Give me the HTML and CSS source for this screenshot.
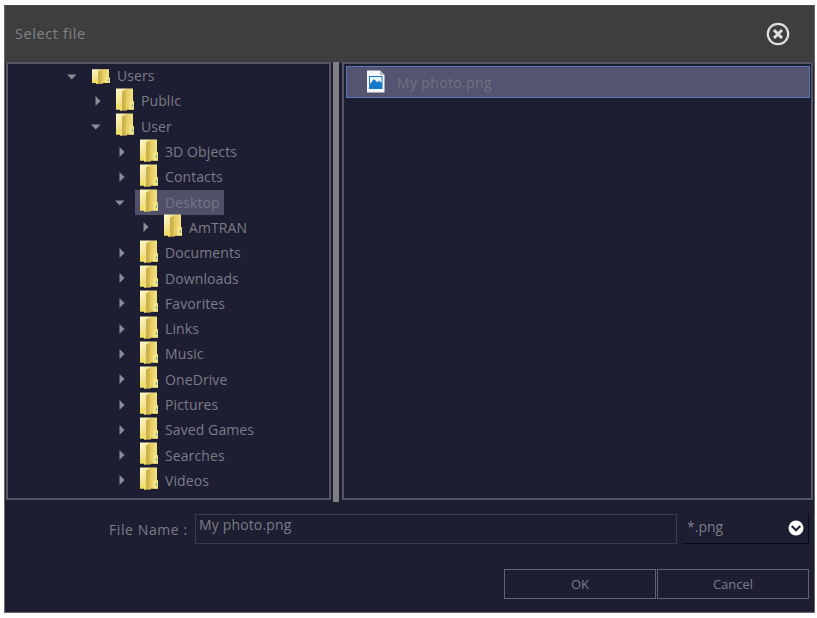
FILE: index.html
```
<!DOCTYPE html>
<html lang="en">
<head>
  <meta charset="UTF-8">
  <meta name="viewport" content="width=device-width, initial-scale=1">
  <title>Select file</title>
  <link rel="stylesheet" href="styles.css">
</head>
<body>
  <!-- Shared icons -->
  <svg class="sprite" width="0" height="0">
    <defs>
      <linearGradient id="back" x1="0" y1="0" x2="1" y2="1">
        <stop offset="0" stop-color="#fffbd0"/>
        <stop offset="0.5" stop-color="#f0dc80"/>
        <stop offset="1" stop-color="#d6b540"/>
      </linearGradient>
      <linearGradient id="flap" x1="0" y1="0" x2="1" y2="0">
        <stop offset="0" stop-color="#c4a640"/>
        <stop offset="0.35" stop-color="#e5cc61"/>
        <stop offset="1" stop-color="#f6e68c"/>
      </linearGradient>
    </defs>
    <symbol id="folder" viewBox="0 0 18 23" preserveAspectRatio="none">
      <path d="M0 0.5H17V13L18 14V21.500H11V22.500H4V21.500H0Z" fill="url(#back)"/>
      <path d="M7 3L11 1H17V13L18 14V21.500H11L7 22.500Z" fill="url(#flap)"/>
      <path d="M6 3L8 4V21L6 22Z" fill="#ccb14c"/>
      <path d="M0 16L6 18V22.500H4V21.500H0Z" fill="#eee06a"/>
      <path d="M13 14L16 12L18 14V21.500H13Z" fill="#f3e387"/>
      <path d="M15.500 18L17 15.500V19Z" fill="#68a9a0"/>
    </symbol>
    <symbol id="closed" viewBox="0 0 24 12"><path d="M4.500 1L9.500 6L4.500 11Z" fill="#8c8c98"/></symbol>
    <symbol id="open" viewBox="0 0 24 12"><path d="M0 4.500H9.500L4.800 9.500Z" fill="#8c8c98"/></symbol>
  </svg>

  <div class="dialog">
    <header class="titlebar">
      <h1>Select file</h1>
      <svg class="close" viewBox="0 0 24 24">
        <circle cx="12" cy="12" r="10.200"/>
        <path d="M8 8L16 16M16 8L8 16"/>
      </svg>
    </header>

    <main class="panes">
      <div class="pane folders">
        <ul class="tree">
          <li>
            <div class="row"><svg class="arrow"><use href="#open"/></svg><span class="item"><svg class="folder short"><use href="#folder"/></svg>Users</span></div>
            <ul>
              <li><div class="row"><svg class="arrow"><use href="#closed"/></svg><span class="item"><svg class="folder"><use href="#folder"/></svg>Public</span></div></li>
              <li>
                <div class="row"><svg class="arrow"><use href="#open"/></svg><span class="item"><svg class="folder"><use href="#folder"/></svg>User</span></div>
                <ul>
                  <li><div class="row"><svg class="arrow"><use href="#closed"/></svg><span class="item"><svg class="folder"><use href="#folder"/></svg>3D Objects</span></div></li>
                  <li><div class="row"><svg class="arrow"><use href="#closed"/></svg><span class="item"><svg class="folder"><use href="#folder"/></svg>Contacts</span></div></li>
                  <li>
                    <div class="row"><svg class="arrow"><use href="#open"/></svg><span class="item selected"><svg class="folder"><use href="#folder"/></svg>Desktop</span></div>
                    <ul>
                      <li><div class="row"><svg class="arrow"><use href="#closed"/></svg><span class="item"><svg class="folder"><use href="#folder"/></svg>AmTRAN</span></div></li>
                    </ul>
                  </li>
                  <li><div class="row"><svg class="arrow"><use href="#closed"/></svg><span class="item"><svg class="folder"><use href="#folder"/></svg>Documents</span></div></li>
                  <li><div class="row"><svg class="arrow"><use href="#closed"/></svg><span class="item"><svg class="folder"><use href="#folder"/></svg>Downloads</span></div></li>
                  <li><div class="row"><svg class="arrow"><use href="#closed"/></svg><span class="item"><svg class="folder"><use href="#folder"/></svg>Favorites</span></div></li>
                  <li><div class="row"><svg class="arrow"><use href="#closed"/></svg><span class="item"><svg class="folder"><use href="#folder"/></svg>Links</span></div></li>
                  <li><div class="row"><svg class="arrow"><use href="#closed"/></svg><span class="item"><svg class="folder"><use href="#folder"/></svg>Music</span></div></li>
                  <li><div class="row"><svg class="arrow"><use href="#closed"/></svg><span class="item"><svg class="folder"><use href="#folder"/></svg>OneDrive</span></div></li>
                  <li><div class="row"><svg class="arrow"><use href="#closed"/></svg><span class="item"><svg class="folder"><use href="#folder"/></svg>Pictures</span></div></li>
                  <li><div class="row"><svg class="arrow"><use href="#closed"/></svg><span class="item"><svg class="folder"><use href="#folder"/></svg>Saved Games</span></div></li>
                  <li><div class="row"><svg class="arrow"><use href="#closed"/></svg><span class="item"><svg class="folder"><use href="#folder"/></svg>Searches</span></div></li>
                  <li><div class="row"><svg class="arrow"><use href="#closed"/></svg><span class="item"><svg class="folder"><use href="#folder"/></svg>Videos</span></div></li>
                </ul>
              </li>
            </ul>
          </li>
        </ul>
      </div>
      <div class="splitter"></div>
      <div class="pane files">
        <div class="file">
          <svg class="picture" viewBox="0 0 18 23">
            <path d="M0 0.500H13L17.500 5V22.500H0Z" fill="#f4f6fa"/>
            <path d="M13 0.500V5H17.500Z" fill="#b9bcc8"/>
            <path d="M2 6H15.500V19H2Z" fill="#1878c8"/>
            <path d="M3 7H14.500V13L12 10.500L10.500 12.500L7 9L3 14Z" fill="#e9f3fb"/>
          </svg>
          <span>My photo.png</span>
        </div>
      </div>
    </main>

    <div class="name-row">
      <label for="name">File Name :</label>
      <input id="name" class="name" type="text" value="My photo.png">
      <div class="filter">
        <span>*.png</span>
        <svg class="chevron" viewBox="0 0 16 16">
          <circle cx="8" cy="8" r="7.500" fill="#fff"/>
          <path d="M3.700 6L8 10.300L12.300 6" fill="none" stroke="#1d1e31" stroke-width="2"/>
        </svg>
      </div>
    </div>

    <footer class="buttons">
      <button>OK</button>
      <button>Cancel</button>
    </footer>
  </div>
</body>
</html>
```
FILE: styles.css
```
* {
  box-sizing: border-box;
}
body {
  margin: 0;
  padding: 5px 2px 0 4px;
  background: #fff;
  font-family: "Open Sans", "Noto Sans", sans-serif;
  font-size: 14px;
  color: #7c7c87;
  overflow: hidden;
}
svg {
  flex: none;
}
.sprite {
  position: absolute;
}
.dialog {
  width: 811px;
  height: 608px;
  background: #1d1e31;
  border: 1px solid #6b6870;
  border-top-color: #494949;
}

/* Title bar */
.titlebar {
  height: 56px;
  padding: 0 24px 0 10px;
  display: flex;
  align-items: center;
  justify-content: space-between;
  background: #3e3e3e;
}
h1 {
  margin: -2px 0 0;
  font-size: 14.5px;
  font-weight: 400;
  letter-spacing: 0.6px;
  color: #83838a;
}
.close {
  width: 24px;
  height: 24px;
  fill: none;
  stroke: #dedede;
  stroke-width: 2.2;
}
.close path {
  stroke-width: 3;
}

/* Panes */
.panes {
  height: 441px;
  display: flex;
  background: linear-gradient(#3e3e3e 1px, transparent 1px);
  padding: 0 1px;
}
.pane {
  height: 438px;
  border: 2px solid #565665;
}
.folders {
  width: 325px;
  padding: 0 0 0 59px;
}
.splitter {
  width: 6px;
  height: 440px;
  margin: 0 3px 0 2px;
  background: #7e7e83;
}
.files {
  flex: 1;
  padding: 2px 1px 0 2px;
}

/* Folder tree */
ul {
  margin: 0;
  padding: 0 0 0 24px;
  list-style: none;
}
.tree {
  margin-top: -1px;
  padding: 0;
}
.row {
  height: 25.3px;
  display: flex;
  align-items: center;
  white-space: nowrap;
}
.arrow {
  width: 24px;
  height: 12px;
  margin-right: -4px;
}
.item {
  height: 25px;
  padding: 0 4px 0 5px;
  display: flex;
  align-items: center;
  letter-spacing: 0.1px;
}
.folder {
  width: 18px;
  height: 23px;
  margin: -3px 7px 0 0;
}
.folder.short {
  height: 15px;
  margin-top: 1px;
}
.selected {
  background: #50506b;
  color: #747484;
}

/* File list */
.file {
  height: 32px;
  padding-left: 20px;
  display: flex;
  align-items: center;
  background: #545470;
  border: 1px solid #5277b2;
  color: #71717f;
  letter-spacing: 0.35px;
}
.picture {
  width: 18px;
  height: 23px;
  margin: -2px 12px 0 0;
}

/* File name and filter */
.name-row {
  height: 30px;
  margin-top: 11px;
  padding: 0 5px 0 104px;
  display: flex;
  align-items: center;
}
label {
  width: 86px;
  letter-spacing: 0.6px;
  white-space: nowrap;
}
.name {
  width: 482px;
  height: 30px;
  padding: 0 3px 9px;
  background: transparent;
  border: 1px solid #3b3b4a;
  font: inherit;
  letter-spacing: 0.15px;
  color: inherit;
}
.filter {
  flex: 1;
  height: 30px;
  margin-left: 5px;
  padding: 0 4px 0 5px;
  display: flex;
  align-items: center;
  justify-content: space-between;
  border: 1px solid #090a14;
  border-width: 0 1px 1px 0;
}
.filter span {
  margin-top: -4px;
}
.chevron {
  width: 16px;
  height: 16px;
  margin-top: -1px;
}

/* Buttons */
.buttons {
  margin-top: 25px;
  padding-right: 5px;
  display: flex;
  justify-content: flex-end;
  gap: 1px;
}
button {
  width: 152px;
  height: 30px;
  padding: 0;
  background: transparent;
  border: 1.5px solid #636370;
  font: inherit;
  font-size: 13px;
  color: inherit;
}
```
